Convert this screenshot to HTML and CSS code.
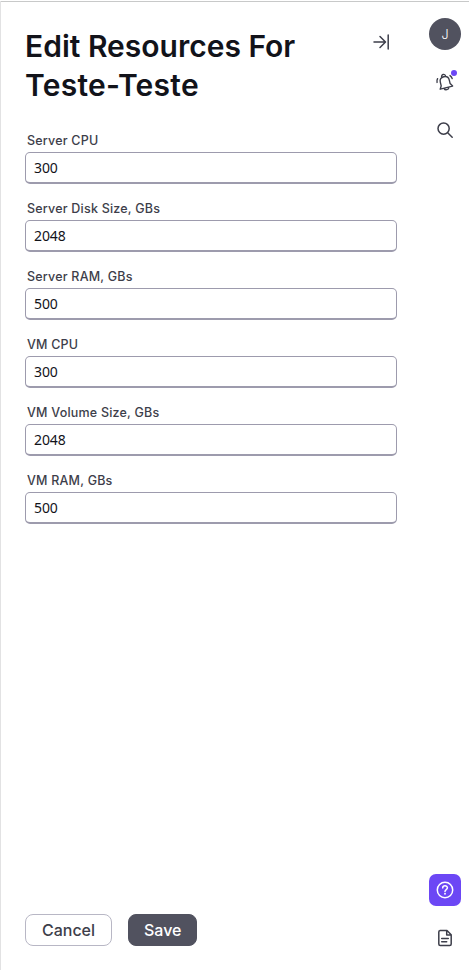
FILE: index.html
```
<!DOCTYPE html>
<html lang="en">
<head>
<meta charset="utf-8">
<title>Edit Resources</title>
<link rel="stylesheet" href="styles.css">
</head>
<body>
<div class="app">
  <main class="panel">
    <header class="header">
      <h1 class="title">Edit Resources For <span class="title-name">Teste-Teste</span></h1>
      <button class="icon-button" aria-label="Close panel">
        <svg width="24" height="24" viewBox="0 0 24 24"><path d="M5 12H16M11 6.5L16.5 12L11 17.5M19.2 5V19"/></svg>
      </button>
    </header>
    <form class="form">
      <label class="field"><span class="label">Server CPU</span><input class="input" value="300"></label>
      <label class="field"><span class="label">Server Disk Size, GBs</span><input class="input" value="2048"></label>
      <label class="field"><span class="label">Server RAM, GBs</span><input class="input" value="500"></label>
      <label class="field"><span class="label">VM CPU</span><input class="input" value="300"></label>
      <label class="field"><span class="label">VM Volume Size, GBs</span><input class="input" value="2048"></label>
      <label class="field"><span class="label">VM RAM, GBs</span><input class="input" value="500"></label>
    </form>
    <footer class="actions">
      <button class="button cancel">Cancel</button>
      <button class="button save">Save</button>
    </footer>
  </main>
  <nav class="rail">
    <div class="avatar">J</div>
    <button class="rail-button" aria-label="Notifications">
      <svg class="bell" width="24" height="24" viewBox="0 0 24 24"><g transform="rotate(-14 12 12)"><path d="M5.6 17.8L7.4 14.8V11C7.4 8.2 9.2 6.6 12 6.6S16.6 8.2 16.6 11V14.8L18.4 17.8ZM10 6.8C9.5 3.4 14.5 3.4 14 6.8M9.6 18.2C10 20.4 14 20.4 14.4 18.2M4.2 10.5C4.2 9.2 4.7 8 5.6 7M19.8 10.5C19.8 9.2 19.3 8 18.4 7"/></g></svg>
      <span class="dot"></span>
    </button>
    <button class="rail-button" aria-label="Search">
      <svg width="24" height="24" viewBox="0 0 24 24"><circle cx="10.6" cy="10.6" r="5.6"/><path d="M14.7 14.7L19.2 19.2"/></svg>
    </button>
    <button class="rail-button help" aria-label="Help">
      <svg width="24" height="24" viewBox="0 0 24 24"><circle cx="12" cy="12" r="7.7"/><path d="M9.7 9.9C9.8 7.2 14.4 7.2 14.4 9.8C14.4 11.6 12 11.5 12 13.4"/><circle class="point" cx="12" cy="15.7" r=".95"/></svg>
    </button>
    <button class="rail-button" aria-label="Documentation">
      <svg width="24" height="24" viewBox="0 0 24 24"><path d="M7 4.5H14L18.2 8.7V18Q18.2 19.5 16.7 19.5H7.3Q5.8 19.5 5.8 18V6Q5.8 4.5 7.3 4.5M13.7 4.8V9H18M8.7 12.5H15.3M8.7 15.7H13.7"/></svg>
    </button>
  </nav>
</div>
</body>
</html>
```
FILE: styles.css
```
* { box-sizing: border-box; }
body { margin: 0; background: #fff; font-family: Inter, sans-serif; }
button { font-family: inherit; cursor: pointer; }
svg { display: block; fill: none; stroke: #3d3e4a; stroke-width: 1.5; stroke-linecap: round; stroke-linejoin: round; }
.app { display: flex; height: 970px; padding-top: 1px; background: linear-gradient(#c8c9c9, #c8c9c9) 0 1px / 100% 1px no-repeat; }
.panel { display: flex; flex-direction: column; width: 421px; padding: 26px 24px 24px; border-left: 1px solid #e2e2e3; }
.header { display: flex; justify-content: space-between; align-items: flex-start; }
.title { width: 300px; margin: 0; color: #12131a; font-size: 30px; line-height: 39px; font-weight: 600; }
.title-name { letter-spacing: .25px; }
.icon-button { display: grid; place-items: center; width: 32px; height: 32px; margin-top: -1px; padding: 0; border: 0; background: none; }
.form { display: flex; flex-direction: column; gap: 16px; margin-top: 27px; }
.field { display: flex; flex-direction: column; }
.label { height: 20px; padding-left: 2px; color: #3d3e4a; font-size: 12.5px; line-height: 17px; font-weight: 500; letter-spacing: .21px; }
.input { width: 100%; height: 32px; padding: 0 8px; border: 1px solid #9d9bad; border-bottom-width: 2px; border-radius: 5px; background: #fff; color: #12131a; font: 14px "Noto Sans", sans-serif; letter-spacing: -.1px; outline: none; }
.actions { display: flex; gap: 16px; margin-top: auto; }
.button { height: 32px; padding: 0 15px; border: 1px solid #b8b7c5; border-radius: 8px; font-size: 16px; font-weight: 500; }
.cancel { width: 87px; background: #fff; color: #3d3e4a; }
.save { width: 69px; border-color: #51525f; background: #51525f; color: #fff; }
.rail { display: flex; flex-direction: column; gap: 16px; width: 48px; padding: 17px 8px 16px; }
.avatar { display: grid; place-items: center; width: 32px; height: 32px; border-radius: 50%; background: #51525f; color: #fff; font-size: 12.5px; font-weight: 300; }
.rail-button { position: relative; display: grid; place-items: center; width: 32px; height: 32px; padding: 0; border: 0; border-radius: 7px; background: transparent; }
.bell { stroke-width: 1.4; }
.dot { position: absolute; top: 4px; right: 4px; width: 6px; height: 6px; border-radius: 50%; background: #6c47f5; }
.help { margin-top: auto; background: #6c47f5; }
.help svg { stroke: #fff; }
.help .point { fill: #fff; stroke: none; }
```
